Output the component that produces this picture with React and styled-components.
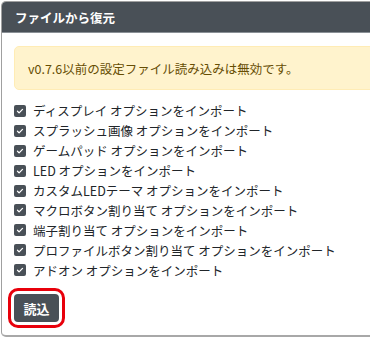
import React from "react";
import styled, { createGlobalStyle } from "styled-components";

const GlobalStyle = createGlobalStyle`
  html, body {
    margin: 0;
    padding: 0;
    background: #fff;
    overflow: hidden;
  }
  body {
    font-family: "Noto Sans CJK JP", "Noto Sans", sans-serif;
    color: #212529;
  }
`;

const options = [
  "ディスプレイ オプションをインポート",
  "スプラッシュ画像 オプションをインポート",
  "ゲームパッド オプションをインポート",
  "LED オプションをインポート",
  "カスタムLEDテーマ オプションをインポート",
  "マクロボタン割り当て オプションをインポート",
  "端子割り当て オプションをインポート",
  "プロファイルボタン割り当て オプションをインポート",
  "アドオン オプションをインポート",
];

const Check = () => (
  <Box>
    <svg width="8" height="8" viewBox="0 0 16 16">
      <path
        d="M3 8.5l3.2 3.2L13 4.8"
        fill="none"
        stroke="#fff"
        strokeWidth="2.6"
        strokeLinecap="round"
        strokeLinejoin="round"
      />
    </svg>
  </Box>
);

const App = () => {
  return (
    <>
      <GlobalStyle />
      <Page>
        <Card>
          <Header>ファイルから復元</Header>
          <Body>
            <Alert>v0.7.6以前の設定ファイル読み込みは無効です。</Alert>
            <List>
              {options.map((label) => (
                <Row key={label}>
                  <Check />
                  <span>{label}</span>
                </Row>
              ))}
            </List>
            <Button>読込</Button>
          </Body>
        </Card>
      </Page>
    </>
  );
};

// viewport shows only the left part of a wider modal
const Page = styled.div`
  padding: 1px 0 0 1px;
  width: 370px;
  height: 339px;
  box-sizing: border-box;
  overflow: hidden;
`;

const Card = styled.div`
  width: 420px;
  height: 336px;
  box-sizing: border-box;
  border: 1px solid #a0a0a0;
  border-bottom: 2px solid #a8a8a8;
  border-radius: 5px 0 0 5px;
  overflow: hidden;
  display: flex;
  flex-direction: column;
`;

const Header = styled.div`
  height: 30px;
  flex: none;
  background: #495057;
  border-bottom: 1px solid #8a9096;
  color: #fff;
  font-weight: 700;
  font-size: 12.5px;
  display: flex;
  align-items: center;
  padding-left: 13px;
`;

const Body = styled.div`
  padding: 13px 12px 0 12px;
  display: flex;
  flex-direction: column;
  align-items: flex-start;
`;

const Alert = styled.div`
  align-self: stretch;
  box-sizing: border-box;
  height: 44px;
  background: #fff3cd;
  border: 1px solid #ffecb5;
  border-radius: 5px;
  color: #664d03;
  font-size: 12.5px;
  display: flex;
  align-items: center;
  padding-left: 13px;
`;

const List = styled.div`
  margin-top: 11px;
  display: flex;
  flex-direction: column;
`;

const Row = styled.label`
  height: 19.9px;
  display: flex;
  align-items: center;
  gap: 7px;
  font-size: 12.5px;
  color: #212529;
  white-space: nowrap;
`;

const Box = styled.span`
  width: 12px;
  height: 12px;
  border-radius: 2px;
  background: #495057;
  display: inline-flex;
  align-items: center;
  justify-content: center;
  flex: none;
`;

const Button = styled.button`
  margin-top: 14px;
  width: 45px;
  height: 28px;
  border: none;
  border-radius: 4px;
  background: #495057;
  color: #fff;
  font-family: inherit;
  font-size: 13px;
  font-weight: 700;
  outline: 3px solid #e8000b;
  outline-offset: 3px;
  padding: 0;
`;

export default App;
